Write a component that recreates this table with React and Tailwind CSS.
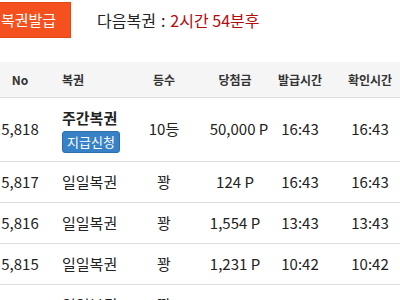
import React from "react";

const rows = [
  { no: "5,817", name: "일일복권", rank: "꽝", prize: "124 P", issued: "16:43", checked: "16:43" },
  { no: "5,816", name: "일일복권", rank: "꽝", prize: "1,554 P", issued: "13:43", checked: "13:43" },
  { no: "5,815", name: "일일복권", rank: "꽝", prize: "1,231 P", issued: "10:42", checked: "10:42" },
  { no: "5,814", name: "일일복권", rank: "꽝", prize: "2,118 P", issued: "07:42", checked: "07:42" },
];

const grid = "grid grid-cols-[40px_90px_68px_74px_56px_84px] items-center";

export default function App() {
  return (
    <div
      className="w-[400px] h-[300px] overflow-hidden bg-white text-[#222]"
      style={{ fontFamily: '"Noto Sans CJK KR", "Noto Sans", sans-serif' }}
    >
      <div className="flex items-center pt-[1px] h-[37px] box-content">
        <div className="-ml-[14px] w-[85px] h-[36px] bg-[#f5511e] border border-[#e4471a] flex items-center justify-center text-white text-[15px] leading-none">
          복권발급
        </div>
        <div className="ml-[26px] text-[16px] leading-none flex items-center">
          <span>다음복권</span>
          <span className="ml-[5px] mr-[5px]">:</span>
          <span className="text-[#b30a0a]">2시간 54분후</span>
        </div>
      </div>
      <div className="mt-[24px] w-[412px]">
        <div className={`${grid} h-[36px] bg-[#f5f5f5] border-b border-[#dedede] text-[12px] font-semibold text-[#333]`}>
          <div className="text-center">No</div>
          <div className="pl-[22px]">복권</div>
          <div className="text-center">등수</div>
          <div className="text-center">당첨금</div>
          <div className="text-center">발급시간</div>
          <div className="text-center">확인시간</div>
        </div>
        <div className={`${grid} h-[64px] border-b border-[#dedede] text-[15px]`}>
          <div className="text-center">5,818</div>
          <div className="pl-[22px] flex flex-col items-start">
            <span className="font-bold leading-[18px] mb-[4px] mt-[2px]">주간복권</span>
            <span className="bg-[#3782c6] border border-[#2d6fab] rounded-[3px] text-white text-[13px] leading-[20px] px-[4px]">
              지급신청
            </span>
          </div>
          <div className="text-center">10등</div>
          <div className="text-center whitespace-nowrap pl-[8px]">50,000 P</div>
          <div className="text-center">16:43</div>
          <div className="text-center">16:43</div>
        </div>
        {rows.map((r) => (
          <div key={r.no} className={`${grid} h-[41px] border-b border-[#dedede] text-[15px]`}>
            <div className="text-center">{r.no}</div>
            <div className="pl-[22px]">{r.name}</div>
            <div className="text-center">{r.rank}</div>
            <div className="text-center whitespace-nowrap">{r.prize}</div>
            <div className="text-center">{r.issued}</div>
            <div className="text-center">{r.checked}</div>
          </div>
        ))}
      </div>
    </div>
  );
}
